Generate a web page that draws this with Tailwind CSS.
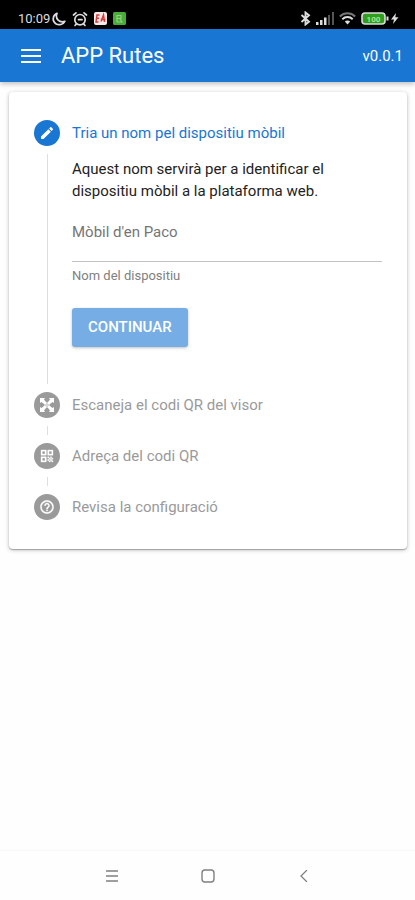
<!DOCTYPE html>
<html lang="ca">
<head>
<meta charset="utf-8">
<meta name="viewport" content="width=device-width, initial-scale=1">
<title>APP Rutes</title>
<script src="https://cdn.jsdelivr.net/npm/@tailwindcss/browser@4"></script>
</head>
<body class="flex min-h-screen flex-col bg-[#fefefe] font-['Roboto','Liberation_Sans',sans-serif] text-[#222]">

<!-- System status bar -->
<div class="flex h-[29px] items-center justify-between bg-black pt-2 pr-4 pl-[18px] text-[#ddd]">
  <div class="flex items-center gap-[6px]">
    <span class="-mr-1 text-[13px] leading-4">10:09</span>
    <svg class="size-[14px]" viewBox="0 0 14 14" fill="none" stroke="currentColor" stroke-width="1.700" stroke-linejoin="round"><path d="M5 1.300C.4 3.200 0 9.300 3.800 11.700 7 13.700 11.300 12.500 12.800 9.300 10.500 10.200 7.900 9.800 6.200 8.200 4.300 6.300 4 3.700 5 1.300Z"/></svg>
    <svg class="size-4" viewBox="0 0 16 16" fill="none" stroke="currentColor" stroke-width="1.700" stroke-linecap="round"><circle cx="8" cy="8.700" r="5.200"/><path d="M1.500 4 4 1.800M14.500 4 12 1.800M4.200 13.200 3 14.500M11.800 13.200 13 14.500M6.500 8.700h3.500"/></svg>
    <svg class="size-[13px]" viewBox="0 0 13 13"><rect width="13" height="13" rx="2" fill="#f7e9e9"/><path d="M5.500 3H3L2 10h2.500M2.700 6.200H5M7 9.500 9.500 3l1 7M6.800 7.500h4.500" fill="none" stroke="#d83a3a" stroke-width="1.500"/></svg>
    <svg class="size-[13px]" viewBox="0 0 13 13"><rect width="13" height="13" rx="1.500" fill="#49ad39"/><path d="M4 10V3.500h4v3H4.500M7 7l2 3H4" fill="none" stroke="#8fd283" stroke-width="1.200"/></svg>
  </div>
  <div class="flex items-center gap-[5px]">
    <svg class="h-[15px] w-[11px]" viewBox="0 0 11 15" fill="none" stroke="currentColor" stroke-width="1.900"><path d="M1.500 4 9 10.700 5.500 13.500V1.500L9 4.300 1.500 11"/></svg>
    <svg class="h-[13px] w-[18px]" viewBox="0 0 18 13"><path d="M0 10h2.500v3H0zM4 8h2.500v5H4zM8 5.500h2.500V13H8z" fill="#ddd"/><path d="M12 3h2v10h-2zM16 0h2v13h-2z" fill="#555"/></svg>
    <svg class="h-[13px] w-[17px]" viewBox="0 0 17 13" fill="none" stroke-width="1.900"><path d="M.8 4.500C5.200.2 11.800.2 16.200 4.500" stroke="#777"/><path d="M3.300 7.200c3-2.900 7.400-2.900 10.400 0" stroke="#ddd"/><path d="M5.800 9.600c1.600-1.500 3.800-1.500 5.400 0L8.500 12.500Z" fill="#ddd" stroke="none"/></svg>
    <svg class="h-[13px] w-[38px]" viewBox="0 0 38 13"><rect x="1" y="1" width="23" height="11" rx="3" fill="#2f9e1c" stroke="#ddd" stroke-width="1.600"/><path d="M25.500 4.500h2v4h-2z" fill="#ddd"/><text x="12.500" y="9.500" text-anchor="middle" font-size="8" font-weight="700" fill="#a5e795">100</text><path d="M35 1 30 7.500h3L32 12l5.500-6.700h-3.200z" fill="#ddd"/></svg>
  </div>
</div>

<!-- Toolbar -->
<header class="flex h-[53px] items-center bg-[#1976d2] pr-3 pl-[21px] text-white shadow-[0_2px_5px_rgba(0,0,0,0.25)]">
  <button type="button" aria-label="Menú" class="mr-5">
    <svg class="h-[14px] w-5" viewBox="0 0 20 14" fill="currentColor"><path d="M0 0h20v2H0zM0 6h20v2H0zM0 12h20v2H0z"/></svg>
  </button>
  <h1 class="flex-1 text-[22px] leading-7">APP Rutes</h1>
  <span class="text-[15px] leading-5">v0.0.1</span>
</header>

<main class="flex-1 pt-[10px] pr-2 pl-[9px]">
  <ol class="rounded bg-white px-[25px] pt-7 pb-[29px] shadow-[0_1px_4px_rgba(0,0,0,0.25),0_1px_1px_rgba(0,0,0,0.25)]">
    <li class="flex gap-3">
      <div class="flex w-[26px] shrink-0 flex-col items-center">
        <span class="flex size-[26px] items-center justify-center rounded-full bg-[#1976d2]">
          <svg class="size-4" viewBox="0 0 24 24" fill="#fff"><path d="M3 17.250V21h3.750L17.810 9.940l-3.750-3.750L3 17.250zM20.710 7.040c.390-.390.390-1.020 0-1.410l-2.340-2.340c-.390-.390-1.020-.390-1.410 0l-1.830 1.830 3.750 3.750 1.830-1.830z"/></svg>
        </span>
        <span class="my-2 w-px flex-1 bg-[#dedede]"></span>
      </div>
      <div class="min-w-0 flex-1 pb-[45px]">
        <h2 class="text-[15px] leading-[26px] text-[#1976d2]">Tria un nom pel dispositiu mòbil</h2>
        <p class="mt-3 text-[15px] leading-[22px]">Aquest nom servirà per a identificar el dispositiu mòbil a la plataforma web.</p>
        <input id="nom" type="text" placeholder="Mòbil d'en Paco" class="block h-[60px] w-full border-b border-[#c2c2c2] bg-transparent text-[15px] outline-none placeholder:text-[#757575]">
        <label for="nom" class="mt-[6px] block text-[13px] leading-4 text-[#808080]">Nom del dispositiu</label>
        <button type="button" class="mt-6 block h-[39px] rounded-[3px] bg-[#75ade4] px-4 text-[15px] font-medium text-white shadow-[0_1px_3px_rgba(0,0,0,0.25)]">CONTINUAR</button>
      </div>
    </li>
    <li class="flex gap-3">
      <div class="flex w-[26px] shrink-0 flex-col items-center">
        <span class="flex size-[26px] items-center justify-center rounded-full bg-[#9a9a9a]">
          <svg class="size-[14px]" viewBox="0 0 14 14" fill="#fff"><path d="M0 0h5L4 1.500 6 4v2H4L1.500 4 0 5zM14 0v5l-1.500-1L10 6H8V4l2-2.500L9 0zM0 14V9l1.500 1L4 8h2v2l-2 2.500L5 14zM14 14H9l1-1.500L8 10V8h2l2.500 2L14 9z"/><path d="M4 4h6v6H4z" fill-opacity=".6"/></svg>
        </span>
        <span class="my-2 w-px flex-1 bg-[#dedede]"></span>
      </div>
      <h2 class="pb-[25px] text-[15px] leading-[26px] text-[#9a9a9a]">Escaneja el codi QR del visor</h2>
    </li>
    <li class="flex gap-3">
      <div class="flex w-[26px] shrink-0 flex-col items-center">
        <span class="flex size-[26px] items-center justify-center rounded-full bg-[#9a9a9a]">
          <svg class="size-4" viewBox="0 0 24 24" fill="#fff" stroke="#fff" stroke-width=".500"><path d="M3 11h8V3H3v8zm2-6h4v4H5V5zM3 21h8v-8H3v8zm2-6h4v4H5v-4zM13 3v8h8V3h-8zm6 6h-4V5h4v4zM19 19h2v2h-2zM13 13h2v2h-2zM15 15h2v2h-2zM13 17h2v2h-2zM15 19h2v2h-2zM17 17h2v2h-2zM17 13h2v2h-2zM19 15h2v2h-2z"/></svg>
        </span>
        <span class="my-2 w-px flex-1 bg-[#dedede]"></span>
      </div>
      <h2 class="pb-[25px] text-[15px] leading-[26px] text-[#9a9a9a]">Adreça del codi QR</h2>
    </li>
    <li class="flex gap-3">
      <span class="flex size-[26px] shrink-0 items-center justify-center rounded-full bg-[#9a9a9a]">
        <svg class="size-4" viewBox="0 0 24 24" fill="#fff" stroke="#fff" stroke-width=".400"><path d="M11 18h2v-2h-2v2zm1-16C6.480 2 2 6.480 2 12s4.480 10 10 10 10-4.480 10-10S17.520 2 12 2zm0 18c-4.410 0-8-3.590-8-8s3.590-8 8-8 8 3.590 8 8-3.590 8-8 8zm0-14c-2.210 0-4 1.790-4 4h2c0-1.100.900-2 2-2s2 .900 2 2c0 2-3 1.750-3 5h2c0-2.250 3-2.500 3-5 0-2.210-1.790-4-4-4z"/></svg>
      </span>
      <h2 class="text-[15px] leading-[26px] text-[#9a9a9a]">Revisa la configuració</h2>
    </li>
  </ol>
</main>

<!-- System navigation -->
<nav class="flex h-[50px] items-center justify-center gap-[83px] border-t border-[#f8f8f8] text-[#808080]">
  <button type="button" aria-label="Recents"><svg class="h-3 w-3" viewBox="0 0 12 12" fill="none" stroke="currentColor" stroke-width="1.300"><path d="M0 1h12M0 6h12M0 11h12"/></svg></button>
  <button type="button" aria-label="Inici"><svg class="size-[14px]" viewBox="0 0 14 14" fill="none" stroke="currentColor" stroke-width="1.400"><rect x="1" y="1" width="12" height="12" rx="3"/></svg></button>
  <button type="button" aria-label="Enrere"><svg class="h-3 w-3" viewBox="0 0 12 12" fill="none" stroke="currentColor" stroke-width="1.300"><path d="M9 0 3 6l6 6"/></svg></button>
</nav>
</body>
</html>
